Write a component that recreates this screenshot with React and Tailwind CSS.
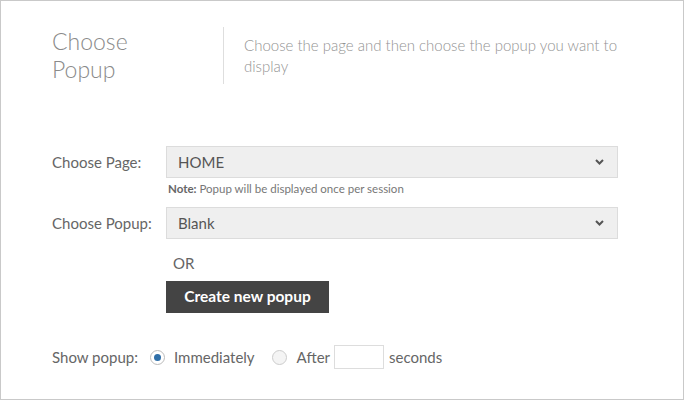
import React from 'react';

function ChevronSmall() {
  return (
    <svg width="9" height="6" viewBox="0 0 9 6" className="shrink-0">
      <path d="M1 1l3.5 3.5L8 1" fill="none" stroke="#555" strokeWidth="2" />
    </svg>
  );
}

function SelectBox({ value }) {
  return (
    <div className="w-[452px] h-[32px] bg-[#efefef] border border-[#dcdcdc] flex items-center justify-between pl-[11px] pr-[13px] text-[15px] text-[#555]">
      <span>{value}</span>
      <ChevronSmall />
    </div>
  );
}

export default function App() {
  return (
    <div className="w-[684px] h-[400px] bg-white border border-[#c9c9c9] text-[#666] font-['Lato','Open_Sans',sans-serif] overflow-hidden">
      {/* header */}
      <div className="flex items-stretch pt-[26px] pl-[51px]">
        <div className="w-[171px] text-[23px] leading-[28px] font-light text-[#8a8a8a]">
          Choose<br />Popup
        </div>
        <div className="w-px bg-[#dedede] h-[57px]"></div>
        <p className="pl-[20px] w-[420px] text-[15px] leading-[21px] font-light text-[#939393] pt-[8px]">
          Choose the page and then choose the popup you want to display
        </p>
      </div>

      {/* form */}
      <div className="pl-[51px] pt-[62px]">
        <div className="flex items-center">
          <span className="w-[114px] text-[15px] text-[#666]">Choose Page:</span>
          <SelectBox value="HOME" />
        </div>
        <div className="pl-[116px] pt-[4px] text-[11.5px] leading-[14px] text-[#777]">
          <b className="font-bold text-[#666]">Note:</b> Popup will be displayed once per session
        </div>
        <div className="flex items-center mt-[11px]">
          <span className="w-[114px] text-[15px] text-[#666]">Choose Popup:</span>
          <SelectBox value="Blank" />
        </div>
        <div className="pl-[121px] pt-[15px] text-[15px] leading-[18px] text-[#666]">OR</div>
        <div className="pl-[114px] pt-[9px]">
          <button className="w-[163px] h-[32px] bg-[#444] text-white text-[15.5px] font-bold">
            Create new popup
          </button>
        </div>
        <div className="flex items-center pt-[32px] text-[15px] text-[#666]">
          <span className="w-[98px]">Show popup:</span>
          <span className="w-[15px] h-[15px] rounded-full border border-[#bbb] bg-white flex items-center justify-center">
            <span className="w-[7px] h-[7px] rounded-full bg-[#2f6fa8]"></span>
          </span>
          <span className="ml-[9px]">Immediately</span>
          <span className="ml-[17px] w-[15px] h-[15px] rounded-full border border-[#ccc] bg-[#f4f4f4]"></span>
          <span className="ml-[10px]">After</span>
          <span className="ml-[4px] w-[50px] h-[24px] border border-[#ddd] bg-white"></span>
          <span className="ml-[5px]">seconds</span>
        </div>
      </div>
    </div>
  );
}
